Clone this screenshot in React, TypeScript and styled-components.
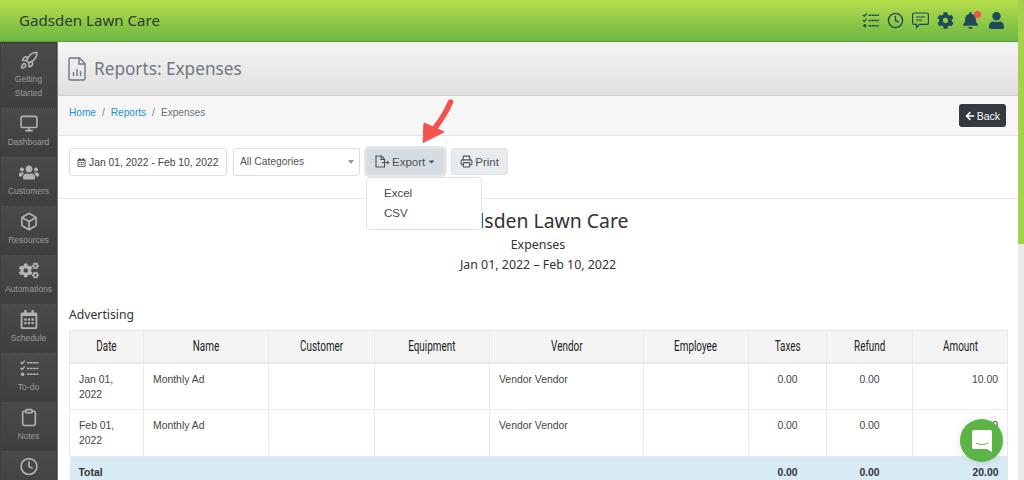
import styled, { createGlobalStyle } from "styled-components";
import { ReactNode } from "react";
import { FaArrowLeft, FaBell, FaCaretDown, FaCog, FaCogs, FaRegCalendarAlt, FaUser, FaUsers } from "react-icons/fa";
import { LuBox, LuClipboard, LuClock, LuMonitor, LuPrinter, LuRocket } from "react-icons/lu";

const GlobalStyle = createGlobalStyle`
  html, body { margin: 0; padding: 0; overflow: hidden; }
  body { font-family: "Liberation Sans", sans-serif; color: #333; background: #fff; }
  * { box-sizing: border-box; }
`;

const Page = styled.div`
  position: relative;
  display: flex;
  width: 1024px;
  height: 480px;
  overflow: hidden;
`;

const Main = styled.div`
  display: flex;
  flex-direction: column;
  width: 1018px;
`;

const Scrollbar = styled.div`
  width: 6px;
  background: #e9e9e9;
`;

const ScrollThumb = styled.div`
  height: 244px;
  background: #a5d24a;
`;

const TopBar = styled.header`
  display: flex;
  align-items: center;
  justify-content: space-between;
  flex: none;
  height: 42px;
  padding: 0 13px 1px 19px;
  background: linear-gradient(#b7dd4c, #6cb743);
  border-bottom: 1px solid #5aa23a;
`;

const Brand = styled.div`
  font-family: "Noto Sans", sans-serif;
  font-size: 15.1px;
  color: #2f3a35;
`;

const TopIcons = styled.div`
  display: flex;
  align-items: center;
  gap: 8px;
  color: #1e4a5a;
  font-size: 17px;

  & svg {
    display: block;
  }
`;

const BellWrap = styled.div`
  position: relative;
  margin-right: 1px;
`;

const BellDot = styled.span`
  position: absolute;
  top: -1px;
  right: -2px;
  width: 7px;
  height: 7px;
  border-radius: 50%;
  background: #f0524e;
`;

const Body = styled.div`
  display: flex;
  flex: 1;
  min-height: 0;
`;

const Sidebar = styled.nav`
  display: flex;
  flex-direction: column;
  flex: none;
  gap: 3px;
  width: 58px;
  padding: 2px 1px 0;
  background: #3f3f3f;
  border-right: 1px solid #777;
`;

const NavItem = styled.div<{ $tall?: boolean }>`
  display: flex;
  flex-direction: column;
  align-items: center;
  flex: none;
  height: ${(p) => (p.$tall ? "61px" : "46px")};
  padding-top: ${(p) => (p.$tall ? "6px" : "5px")};
  background: linear-gradient(#4a4a4a, #3f3f3f);
  border-top: 1px dotted #5c5c5c;
  color: #9c9c9c;
  font-size: 8.5px;
  line-height: 14px;
  text-align: center;

  & svg {
    display: block;
    flex: none;
    width: 20px;
    height: 19px;
    margin-bottom: 2px;
    color: #b4b4b4;
  }
`;

const Content = styled.main`
  flex: 1;
  min-width: 0;
  display: flex;
  flex-direction: column;
`;

const TitleBar = styled.div`
  display: flex;
  align-items: center;
  flex: none;
  gap: 8px;
  height: 54px;
  padding-left: 10px;
  background: linear-gradient(#f5f5f5, #dfdfdf);
  border-bottom: 1px solid #cfcfcf;
  color: #6f7780;
`;

const PageTitle = styled.h1`
  margin: 0;
  font-family: "Noto Sans", sans-serif;
  font-size: 17.2px;
  font-weight: 400;
`;

const CrumbBar = styled.div`
  display: flex;
  align-items: center;
  justify-content: space-between;
  flex: none;
  height: 40px;
  padding: 0 12px 0 11px;
  background: #f6f6f6;
  border-bottom: 1px solid #e4e4e4;
  font-size: 10.1px;
  color: #6c757d;
`;

const Crumbs = styled.div`
  display: flex;
  gap: 6px;
  margin-top: -7px;
`;

const CrumbLink = styled.span`
  color: #1c8fd6;
`;

const BackButton = styled.div`
  display: flex;
  align-items: center;
  gap: 2px;
  height: 23px;
  padding: 0 6px;
  border-radius: 3px;
  background: #343a40;
  color: #fff;
  font-size: 10.5px;
`;

const FilterBar = styled.div`
  display: flex;
  align-items: flex-start;
  flex: none;
  gap: 6px;
  height: 63px;
  padding: 12px 11px 0;
  border-bottom: 1px solid #e6e6e6;
`;

const DateInput = styled.div`
  display: flex;
  align-items: center;
  gap: 3px;
  width: 158px;
  height: 28px;
  padding-left: 7px;
  border: 1px solid #ddd;
  border-radius: 3px;
  font-size: 10.3px;
  color: #444;
`;

const SelectBox = styled.div`
  position: relative;
  width: 127px;
  height: 28px;
  padding-left: 6px;
  border: 1px solid #ddd;
  border-radius: 3px;
  font-size: 10.3px;
  line-height: 26px;
  color: #555;
`;

const SelectCaret = styled.span`
  position: absolute;
  top: 11px;
  right: 5px;
  border-top: 4px solid #999;
  border-left: 3px solid transparent;
  border-right: 3px solid transparent;
`;

const ToolButton = styled.div<{ $active?: boolean }>`
  display: flex;
  align-items: center;
  gap: 2px;
  height: 27px;
  padding: 0 8px;
  border: 1px solid #dfe3e6;
  border-radius: 3px;
  background: ${(p) => (p.$active ? "#d6dde2" : "#e9ecef")};
  box-shadow: ${(p) => (p.$active ? "0 0 0 2px #e4e8eb" : "none")};
  font-size: 11.5px;
  color: #495057;
`;

const Dropdown = styled.div`
  position: absolute;
  left: 366px;
  top: 177px;
  width: 116px;
  height: 53px;
  padding: 5px 17px;
  border: 1px solid #e2e2e2;
  border-radius: 3px;
  background: #fff;
  font-size: 11.5px;
  line-height: 20px;
  color: #4a4a4a;
`;

const Arrow = styled.svg`
  position: absolute;
  left: 420px;
  top: 97px;
`;

const ChatBubble = styled.div`
  position: absolute;
  left: 960px;
  top: 419px;
  display: flex;
  align-items: center;
  justify-content: center;
  width: 43px;
  height: 43px;
  border-radius: 50%;
  background: #5cb346;
  box-shadow: 0 1px 8px rgba(0, 0, 0, 0.12);
`;

const Report = styled.section`
  padding: 0 11px;
`;

const ReportHead = styled.div`
  padding-top: 8px;
  text-align: center;
  font-family: "Noto Sans", sans-serif;
  color: #333;
`;

const ReportName = styled.div`
  font-size: 19.4px;
  line-height: 28px;
`;

const ReportLine = styled.div`
  font-size: 12.4px;
  line-height: 20px;
`;

const SectionTitle = styled.div`
  margin-top: 31px;
  margin-bottom: 6px;
  font-family: "Noto Sans", sans-serif;
  font-size: 12.2px;
  line-height: 18px;
`;

const Table = styled.table`
  width: 938px;
  border-collapse: collapse;
  table-layout: fixed;
  font-size: 10.4px;
  color: #444;
`;

const HeadCell = styled.th`
  height: 32px;
  padding: 0;
  border: 1px solid #e6e8ea;
  border-bottom-width: 2px;
  background: #f4f4f4;
  font-family: "Roboto", sans-serif;
  font-size: 15px;
  font-weight: 400;
  color: #222;
`;

const HeadLabel = styled.span`
  display: inline-block;
  transform: scaleX(0.66);
`;

const Cell = styled.td<{ $right?: boolean; $center?: boolean }>`
  height: 47px;
  padding: 8px 9px 0;
  border: 1px solid #e8eaec;
  vertical-align: top;
  line-height: 15px;
  text-align: ${(p) => (p.$right ? "right" : p.$center ? "center" : "left")};
`;

const TotalCell = styled.td<{ $right?: boolean; $center?: boolean }>`
  height: 30px;
  padding: 10px 9px 0;
  background: #d9ebf5;
  vertical-align: top;
  font-weight: 700;
  color: #333;
  text-align: ${(p) => (p.$right ? "right" : p.$center ? "center" : "left")};
`;

const columns = [
  ["Date", 74],
  ["Name", 125],
  ["Customer", 106],
  ["Equipment", 115],
  ["Vendor", 154],
  ["Employee", 105],
  ["Taxes", 78],
  ["Refund", 86],
  ["Amount", 95],
] as const;

const rows = [
  { date: "Jan 01, 2022", amount: "10.00" },
  { date: "Feb 01, 2022", amount: "10.00" },
];

function ReportIcon() {
  return (
    <svg width="18" height="24" viewBox="0 0 18 24" fill="none" stroke="#6f7780" strokeWidth="1.4">
      <path d="M2.500 1h9L17 6.500v15a1.500 1.500 0 0 1-1.500 1.500h-13A1.500 1.500 0 0 1 1 21.500v-19A1.500 1.500 0 0 1 2.500 1z" />
      <path d="M11 1v6h6M5.500 19v-4M9 19v-7M12.500 19v-5" />
    </svg>
  );
}

function FileExportIcon() {
  return (
    <svg width="15" height="13" viewBox="0 0 15 13" fill="none" stroke="#495057" strokeWidth="1.100">
      <path d="M1 1h5.500L9.500 4v8H1z" />
      <path d="M6 1v3.500h3.500M7 7.500h6.500" />
      <path d="M12 5.500l2.500 2-2.500 2z" fill="#495057" stroke="none" />
    </svg>
  );
}

function TasksIcon({ size = 17 }: { size?: number }) {
  return (
    <svg width={size} height={size} viewBox="0 0 18 18" fill="none" stroke="currentColor">
      <path d="M1 3l1.500 1.500L5 1.500M1 8.500L2.500 10 5 7" strokeWidth="1.300" />
      <circle cx="3" cy="14.500" r="1.700" fill="currentColor" stroke="none" />
      <path d="M7 3.500h11M7 9h11M7 14.500h11" strokeWidth="1.500" strokeDasharray="2.500 0.500" />
    </svg>
  );
}

function CommentIcon() {
  return (
    <svg width="17" height="17" viewBox="0 0 17 17" fill="none" stroke="currentColor" strokeWidth="1.200">
      <path d="M2 1h13a1.400 1.400 0 0 1 1.400 1.400v8.600a1.400 1.400 0 0 1-1.400 1.400H7.500L4.500 15.500v-3.100H2A1.400 1.400 0 0 1 .6 11V2.400A1.400 1.400 0 0 1 2 1z" />
      <path d="M4 5h9M4 8h6" />
    </svg>
  );
}

function NavEntry({ icon, label, tall }: { icon: ReactNode; label: ReactNode; tall?: boolean }) {
  return (
    <NavItem $tall={tall}>
      {icon}
      <span>{label}</span>
    </NavItem>
  );
}

export default function App() {
  return (
    <Page>
      <GlobalStyle />
      <Main>
        <TopBar>
          <Brand>Gadsden Lawn Care</Brand>
          <TopIcons>
            <TasksIcon />
            <LuClock size={17} />
            <CommentIcon />
            <FaCog />
            <BellWrap>
              <FaBell />
              <BellDot />
            </BellWrap>
            <FaUser />
          </TopIcons>
        </TopBar>
        <Body>
          <Sidebar>
            <NavEntry tall icon={<LuRocket />} label={<>Getting<br />Started</>} />
            <NavEntry icon={<LuMonitor />} label="Dashboard" />
            <NavEntry icon={<FaUsers />} label="Customers" />
            <NavEntry icon={<LuBox />} label="Resources" />
            <NavEntry icon={<FaCogs />} label="Automations" />
            <NavEntry icon={<FaRegCalendarAlt />} label="Schedule" />
            <NavEntry icon={<TasksIcon />} label="To-do" />
            <NavEntry icon={<LuClipboard />} label="Notes" />
            <NavEntry icon={<LuClock />} label="" />
          </Sidebar>
          <Content>
            <TitleBar>
              <ReportIcon />
              <PageTitle>Reports: Expenses</PageTitle>
            </TitleBar>
            <CrumbBar>
              <Crumbs>
                <CrumbLink>Home</CrumbLink>
                <span>/</span>
                <CrumbLink>Reports</CrumbLink>
                <span>/</span>
                <span>Expenses</span>
              </Crumbs>
              <BackButton>
                <FaArrowLeft size={10} />
                Back
              </BackButton>
            </CrumbBar>
            <FilterBar>
              <DateInput>
                <FaRegCalendarAlt size={9} />
                Jan 01, 2022 - Feb 10, 2022
              </DateInput>
              <SelectBox>
                All Categories
                <SelectCaret />
              </SelectBox>
              <ToolButton $active>
                <FileExportIcon />
                Export
                <FaCaretDown size={9} />
              </ToolButton>
              <ToolButton>
                <LuPrinter size={13} />
                Print
              </ToolButton>
            </FilterBar>
            <Report>
              <ReportHead>
                <ReportName>Gadsden Lawn Care</ReportName>
                <ReportLine>Expenses</ReportLine>
                <ReportLine>Jan 01, 2022 – Feb 10, 2022</ReportLine>
              </ReportHead>
              <SectionTitle>Advertising</SectionTitle>
              <Table>
                <colgroup>
                  {columns.map(([name, width]) => (
                    <col key={name} width={width} />
                  ))}
                </colgroup>
                <thead>
                  <tr>
                    {columns.map(([name]) => (
                      <HeadCell key={name}>
                        <HeadLabel>{name}</HeadLabel>
                      </HeadCell>
                    ))}
                  </tr>
                </thead>
                <tbody>
                  {rows.map((row) => (
                    <tr key={row.date}>
                      <Cell>{row.date}</Cell>
                      <Cell>Monthly Ad</Cell>
                      <Cell />
                      <Cell />
                      <Cell>Vendor Vendor</Cell>
                      <Cell />
                      <Cell $center>0.00</Cell>
                      <Cell $center>0.00</Cell>
                      <Cell $right>{row.amount}</Cell>
                    </tr>
                  ))}
                  <tr>
                    <TotalCell colSpan={6}>Total</TotalCell>
                    <TotalCell $center>0.00</TotalCell>
                    <TotalCell $center>0.00</TotalCell>
                    <TotalCell $right>20.00</TotalCell>
                  </tr>
                </tbody>
              </Table>
            </Report>
          </Content>
        </Body>
      </Main>
      <Scrollbar>
        <ScrollThumb />
      </Scrollbar>
      <Dropdown>
        <div>Excel</div>
        <div>CSV</div>
      </Dropdown>
      <Arrow width="36" height="50" viewBox="0 0 36 50">
        <path d="M30.500 5C26 16 21 23 15 31" stroke="#f4524d" strokeWidth="5.500" strokeLinecap="round" fill="none" />
        <path d="M4 26L3 45.500 24 35Z" fill="#f4524d" stroke="#f4524d" strokeLinejoin="round" />
      </Arrow>
      <ChatBubble>
        <svg width="20" height="22" viewBox="0 0 20 22">
          <path d="M2 0h16a2 2 0 0 1 2 2v20l-5-3H2a2 2 0 0 1-2-2V2a2 2 0 0 1 2-2z" fill="#fff" />
          <path d="M4 13c3.500 2 8.500 2 12 0" stroke="#5cb346" strokeWidth="1" fill="none" strokeLinecap="round" />
        </svg>
      </ChatBubble>
    </Page>
  );
}
